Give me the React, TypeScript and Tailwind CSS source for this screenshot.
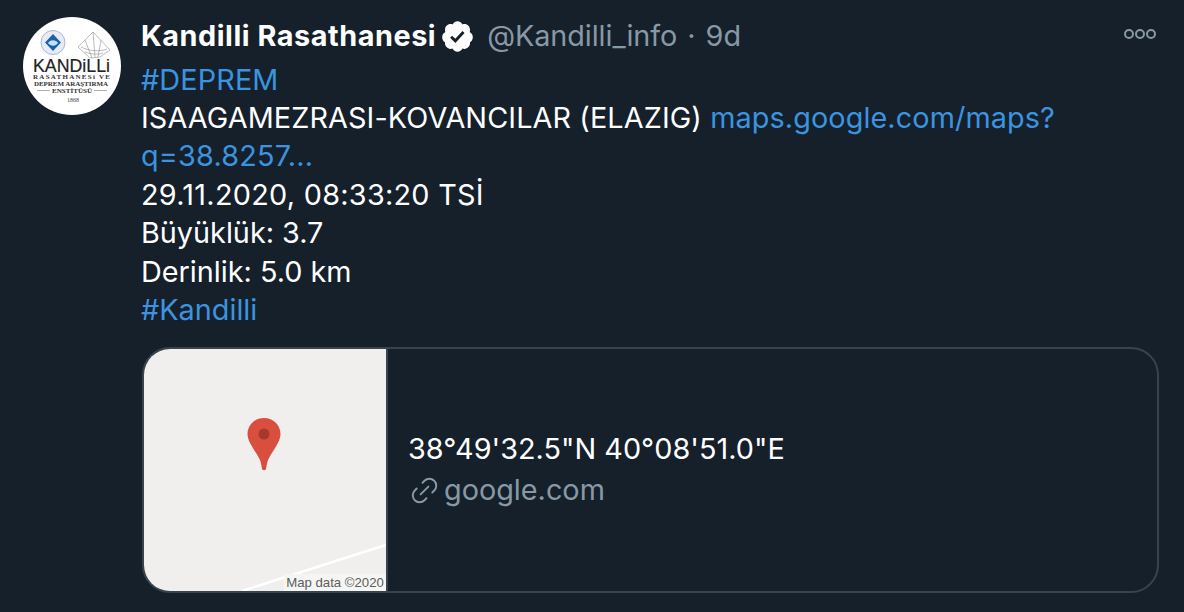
import React from "react";
import { Link2 } from "lucide-react";

const Logo = () => (
    <div className="w-[98px] h-[98px] shrink-0 rounded-full bg-white overflow-hidden">
        <svg width="98" height="98" viewBox="0 0 98 98" fill="#222222">
            <circle cx="30" cy="25.500" r="12" fill="#e8ebf3" stroke="#a9b5d4" strokeWidth="1" />
            <path d="M30 17 L38 25.500 L30 34 L22 25.500 Z" fill="#1c5fae" />
            <path d="M25 26 C28 22 33 23 35 26 C33 29 28 30 25 26 Z" fill="#bfe3f6" />
            <g fill="none" stroke="#8f8f8f" strokeWidth="0.6">
                <path d="M70 15 L55 30 L67 41 L77 40 L87 33 Z" />
                <path d="M70 15 L72 40 M62 23 L69 41 M78 23 L75 40 M58 30 C66 34 76 35 84 32 M62 35 C67 37 74 38 80 36" />
            </g>
            <text x="10" y="54.500" fontFamily="Liberation Sans, sans-serif" fontSize="19" stroke="#222222" strokeWidth="0.2" textLength="77" lengthAdjust="spacingAndGlyphs">KANDiLLi</text>
            <text x="10" y="61.500" fontFamily="Liberation Serif, serif" fontSize="7" fontWeight="700" fill="#333333" textLength="77" lengthAdjust="spacing">RASATHANESi VE</text>
            <text x="11" y="68.500" fontFamily="Liberation Serif, serif" fontSize="7" fontWeight="700" fill="#333333" textLength="74" lengthAdjust="spacing">DEPREM ARAŞTIRMA</text>
            <path d="M14 73.500 H27 M71 73.500 H84" stroke="#999999" strokeWidth="0.8" />
            <text x="29" y="76" fontFamily="Liberation Serif, serif" fontSize="6.500" fontWeight="700" fill="#333333" textLength="40" lengthAdjust="spacingAndGlyphs">ENSTİTÜSÜ</text>
            <text x="44" y="85" fontFamily="Liberation Serif, serif" fontSize="6" fill="#444444" textLength="12">1868</text>
        </svg>
    </div>
);

const Verified = () => (
    <svg width="35" height="35" viewBox="0 0 24 24" className="shrink-0">
        <path
            fill="#ffffff"
            d="M22.5 12.5c0-1.58-.875-2.95-2.148-3.6.154-.435.238-.905.238-1.4 0-2.21-1.71-3.998-3.818-3.998-.47 0-.92.084-1.336.25C14.818 2.415 13.51 1.5 12 1.5s-2.816.917-3.437 2.25c-.415-.165-.866-.25-1.336-.25-2.11 0-3.818 1.79-3.818 4 0 .494.083.964.237 1.4-1.272.65-2.147 2.018-2.147 3.6 0 1.495.782 2.798 1.942 3.486-.02.17-.032.34-.032.514 0 2.21 1.708 4 3.818 4 .47 0 .92-.086 1.335-.25.62 1.334 1.926 2.25 3.437 2.25 1.512 0 2.818-.916 3.437-2.25.415.163.865.248 1.336.248 2.11 0 3.818-1.79 3.818-4 0-.174-.012-.344-.033-.513 1.158-.687 1.943-1.99 1.943-3.484z"
        />
        <path
            fill="#15202b"
            d="M10.54 16.4l-3.6-3.6 1.35-1.36 2.18 2.18 4.95-5.4 1.42 1.3z"
        />
    </svg>
);

const MapPreview = () => (
    <div className="w-[244px] shrink-0 bg-[#f0efed] border-r-2 border-[#38444d] relative overflow-hidden">
        <svg width="242" height="242" viewBox="0 0 242 242" className="absolute inset-0">
            <path d="M98 242 L242 196" stroke="#ffffff" strokeWidth="2.5" />
            <g transform="translate(-2 -2)">
                <path
                    fill="#d94f3f"
                    d="M122 71 C112.500 71 105.500 78 105.500 87 C105.500 95 113 103 117.500 112 C119 115.500 119.500 119 120 122 C120.300 123.500 123.700 123.500 124 122 C124.500 119 125 115.500 126.500 112 C131 103 138.500 95 138.500 87 C138.500 78 131.500 71 122 71 Z"
                />
                <circle cx="122" cy="87" r="5.500" fill="#a9382c" />
            </g>
        </svg>
        <div className="absolute right-0 bottom-0 h-[17px] w-[102px] bg-[#f5f5f3] text-[13.2px] leading-[17px] text-[#5c5c5c] text-center whitespace-nowrap font-['Liberation_Sans',sans-serif]">
            Map data ©2020
        </div>
    </div>
);

export default function App() {
    return (
        <div className="w-[1184px] h-[612px] overflow-hidden bg-[#15202b] text-white font-['Inter',sans-serif] flex items-start pl-[23px] pt-[17px] pr-[25px]">
            <Logo />
            <div className="ml-[21px] flex-1 min-w-0">
                <div className="flex items-center h-[38px] text-[28.8px] whitespace-nowrap -ml-[1px]">
                    <span className="font-bold text-[#ffffff] tracking-[0.55px]">Kandilli Rasathanesi</span>
                    <span className="ml-[4px]"><Verified /></span>
                    <span className="ml-[12px] text-[#8899a6] tracking-[-0.07px]">@Kandilli_info</span>
                    <span className="ml-[10px] text-[#8899a6]">·</span>
                    <span className="ml-[10px] text-[#8899a6]">9d</span>
                    <div className="ml-auto flex gap-[1px] pr-[3px] -mt-[4px]">
                        <span className="w-[10px] h-[10px] rounded-full border-[2px] border-[#8899a6]"></span>
                        <span className="w-[10px] h-[10px] rounded-full border-[2px] border-[#8899a6]"></span>
                        <span className="w-[10px] h-[10px] rounded-full border-[2px] border-[#8899a6]"></span>
                    </div>
                </div>
                <div className="text-[28.8px] leading-[38.4px] whitespace-nowrap pt-[5.6px] -ml-[1px]">
                    <div className="text-[#3b94e0] tracking-[0.13px]">#DEPREM</div>
                    <div className="tracking-[0.1px]">
                        ISAAGAMEZRASI-KOVANCILAR (ELAZIG) <span className="text-[#3b94e0]">maps.google.com/maps?</span>
                    </div>
                    <div className="text-[#3b94e0] tracking-[0.2px]">q=38.8257...</div>
                    <div className="tracking-[0.28px]">29.11.2020, 08:33:20 TSİ</div>
                    <div>Büyüklük: 3.7</div>
                    <div>Derinlik: 5.0 km</div>
                    <div className="text-[#3b94e0]">#Kandilli</div>
                </div>
                <div className="mt-[17.8px] h-[246px] w-[1017px] rounded-[28px] border-2 border-[#38444d] overflow-hidden flex">
                    <MapPreview />
                    <div className="flex-1 flex flex-col justify-center pl-[20px] text-[28.8px] leading-[38.4px] whitespace-nowrap pb-[1px]">
                        <div className="tracking-[0.02px]">38°49'32.5"N 40°08'51.0"E</div>
                        <div className="flex items-center text-[#8899a6] mt-[3px]">
                            <Link2 size={33} strokeWidth={1.4} className="-rotate-45 mr-[3px]" />
                            google.com
                        </div>
                    </div>
                </div>
            </div>
        </div>
    );
}
